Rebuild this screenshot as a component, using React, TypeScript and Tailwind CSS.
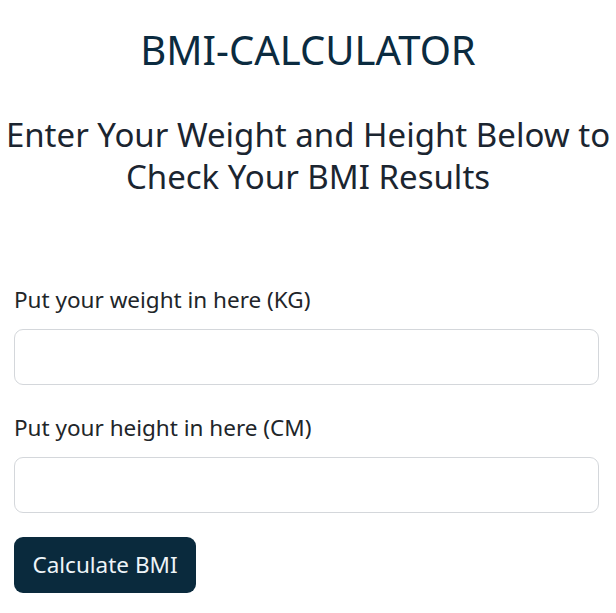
export default function App() {
  return (
    <div className="min-h-[613px] bg-white font-['Noto_Sans',sans-serif] text-[#212529]">
      <div className="pt-[26px] text-center">
        <h1 className="text-[40px] leading-[1.2] text-[#0b2b40]">BMI-CALCULATOR</h1>
        <h2 className="mt-[40px] whitespace-nowrap text-[33px] leading-[42px] text-[#1b2530]">
          Enter Your Weight and Height Below to
          <br />
          Check Your BMI Results
        </h2>
      </div>

      <form className="mt-[83px] w-[585px] px-[14px] box-content" onSubmit={(e) => e.preventDefault()}>
        <div className="mb-[24px]">
          <label className="mb-[12px] block pt-[2px] text-[22.5px] leading-[34px]">Put your weight in here (KG)</label>
          <input
            type="number"
            className="block h-[56px] w-full rounded-[9px] border border-[#d4d7db] bg-white px-4 outline-none"
          />
        </div>
        <div className="mb-[24px]">
          <label className="mb-[12px] block pt-[2px] text-[22.5px] leading-[34px]">Put your height in here (CM)</label>
          <input
            type="number"
            className="block h-[56px] w-full rounded-[9px] border border-[#d4d7db] bg-white px-4 outline-none"
          />
        </div>
        <button
          type="submit"
          className="h-[56px] w-[182px] rounded-[9px] bg-[#0a2a3d] text-[22.5px] text-[#eef4f8]"
        >
          Calculate BMI
        </button>
      </form>
    </div>
  );
}
